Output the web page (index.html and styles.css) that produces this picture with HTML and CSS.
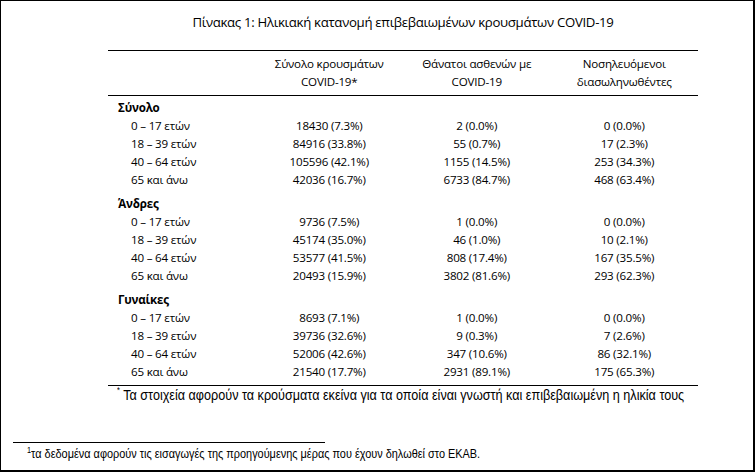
FILE: index.html
```html
<!DOCTYPE html>
<html lang="el">
<head>
<meta charset="utf-8">
<title>Πίνακας 1</title>
<link rel="stylesheet" href="styles.css">
</head>
<body>
<div class="page">
  <div class="sheet">
    <h1 class="title">Πίνακας 1: Ηλικιακή κατανομή επιβεβαιωμένων κρουσμάτων COVID-19</h1>
    <table class="data">
      <colgroup>
        <col class="c-label"><col class="c-num"><col class="c-num"><col class="c-num">
      </colgroup>
      <thead>
        <tr>
          <th></th>
          <th>Σύνολο κρουσμάτων<br>COVID-19*</th>
          <th>Θάνατοι ασθενών με<br>COVID-19</th>
          <th>Νοσηλευόμενοι<br>διασωληνωθέντες</th>
        </tr>
      </thead>
      <tbody>
        <tr class="section first"><td colspan="4">Σύνολο</td></tr>
        <tr><td>0 – 17 ετών</td><td>18430 (7.3%)</td><td>2 (0.0%)</td><td>0 (0.0%)</td></tr>
        <tr><td>18 – 39 ετών</td><td>84916 (33.8%)</td><td>55 (0.7%)</td><td>17 (2.3%)</td></tr>
        <tr><td>40 – 64 ετών</td><td>105596 (42.1%)</td><td>1155 (14.5%)</td><td>253 (34.3%)</td></tr>
        <tr><td>65 και άνω</td><td>42036 (16.7%)</td><td>6733 (84.7%)</td><td>468 (63.4%)</td></tr>
        <tr class="section"><td colspan="4">Άνδρες</td></tr>
        <tr><td>0 – 17 ετών</td><td>9736 (7.5%)</td><td>1 (0.0%)</td><td>0 (0.0%)</td></tr>
        <tr><td>18 – 39 ετών</td><td>45174 (35.0%)</td><td>46 (1.0%)</td><td>10 (2.1%)</td></tr>
        <tr><td>40 – 64 ετών</td><td>53577 (41.5%)</td><td>808 (17.4%)</td><td>167 (35.5%)</td></tr>
        <tr><td>65 και άνω</td><td>20493 (15.9%)</td><td>3802 (81.6%)</td><td>293 (62.3%)</td></tr>
        <tr class="section"><td colspan="4">Γυναίκες</td></tr>
        <tr><td>0 – 17 ετών</td><td>8693 (7.1%)</td><td>1 (0.0%)</td><td>0 (0.0%)</td></tr>
        <tr><td>18 – 39 ετών</td><td>39736 (32.6%)</td><td>9 (0.3%)</td><td>7 (2.6%)</td></tr>
        <tr><td>40 – 64 ετών</td><td>52006 (42.6%)</td><td>347 (10.6%)</td><td>86 (32.1%)</td></tr>
        <tr class="last"><td>65 και άνω</td><td>21540 (17.7%)</td><td>2931 (89.1%)</td><td>175 (65.3%)</td></tr>
      </tbody>
    </table>
    <p class="note"><span class="narrow"><sup>*</sup> Τα στοιχεία αφορούν τα κρούσματα εκείνα για τα οποία είναι γνωστή και επιβεβαιωμένη η ηλικία τους</span></p>
  </div>
  <footer class="foot">
    <hr class="foot-rule">
    <p class="foot-text"><span class="narrow"><sup>1</sup>τα δεδομένα αφορούν τις εισαγωγές της προηγούμενης μέρας που έχουν δηλωθεί στο ΕΚΑΒ.</span></p>
  </footer>
</div>
</body>
</html>
```

FILE: styles.css
```css
html, body {
  margin: 0;
  padding: 0;
  background: #ffffff;
}

.page {
  box-sizing: border-box;
  width: 755px;
  height: 472px;
  overflow: hidden;
  border-style: solid;
  border-color: #000;
  border-width: 1px 2px 2px 1px;
  display: flex;
  flex-direction: column;
  font-family: "Open Sans", "Noto Sans", sans-serif;
  color: #000;
}

.sheet {
  margin-left: 107px;
  width: 590px;
  padding-top: 12px;
}

.title {
  margin: 0;
  font-size: 13.2px;
  letter-spacing: -0.3px;
  font-weight: 400;
  line-height: 18px;
  text-align: center;
}

.data {
  margin-top: 19px;
  width: 590px;
  table-layout: fixed;
  border-collapse: collapse;
  font-size: 11.6px;
  letter-spacing: -0.2px;
  line-height: 18px;
}

.c-label, .c-num {
  width: 147.5px;
}

.data thead th {
  font-weight: 400;
  text-align: center;
  padding: 4px 0;
  border-top: 1px solid #000;
  border-bottom: 1px solid #000;
}

.data td {
  padding: 0;
  text-align: center;
  white-space: nowrap;
}

.data td:first-child {
  text-align: left;
  padding-left: 23px;
}

.data .section td {
  font-weight: 700;
  padding-left: 10px;
  padding-top: 6px;
}

.data .section.first td {
  padding-top: 3px;
}

.data .last td {
  padding-bottom: 4px;
  border-bottom: 1px solid #000;
}

.narrow {
  display: inline-block;
  white-space: nowrap;
  transform: scaleX(0.82);
  transform-origin: left center;
}

.note {
  margin: 0 0 0 9px;
  overflow: hidden;
  font-family: "Liberation Sans", Arial, sans-serif;
  font-size: 15.4px;
  line-height: 18px;
  white-space: nowrap;
}

.note sup {
  font-size: 9px;
  line-height: 0;
  vertical-align: 7px;
}

.foot {
  margin-top: auto;
  padding: 0 0 9px 12px;
}

.foot-rule {
  margin: 0;
  width: 312px;
  border: 0;
  border-top: 1px solid #000;
}

.foot-text {
  margin: 3px 0 0 14px;
  overflow: hidden;
  font-family: "Liberation Sans", Arial, sans-serif;
  font-size: 13.3px;
  line-height: 15px;
  white-space: nowrap;
}

.foot-text sup {
  font-size: 9px;
  line-height: 0;
  vertical-align: 5px;
}
```
